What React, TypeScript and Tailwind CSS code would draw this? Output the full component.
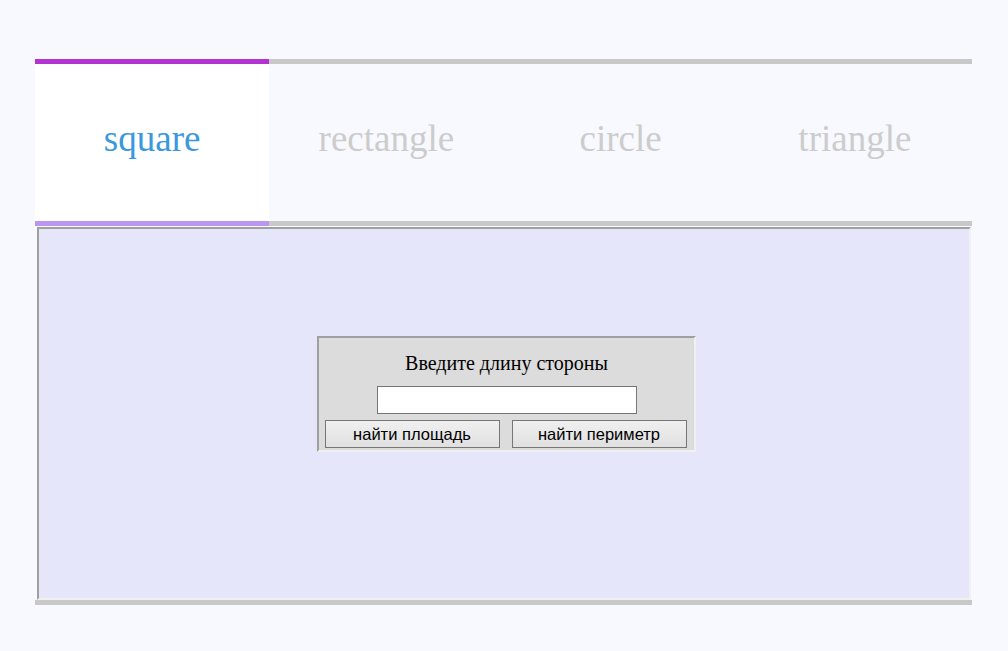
import React from "react";

const tabs = ["square", "rectangle", "circle", "triangle"];

export default function App() {
  return (
    <div className="min-h-[651px] w-full bg-[#f8f8ff] pt-[59px] px-[35px] [font-family:'Liberation_Serif',serif]">
      <div className="w-[937px]">
        <div className="flex">
          {tabs.map((t, i) => (
            <div
              key={t}
              className={
                "flex-1 h-[167px] flex items-center justify-center border-t-[5px] border-b-[5px] text-[37px] " +
                (i === 0
                  ? "bg-white border-t-[#b233d1] border-b-[#bb96f0] text-[#3a98dc]"
                  : "border-t-[#c8c8c8] border-b-[#c8c8c8] text-[#cccccc]")
              }
            >
              <span className="-mt-[7px]">{t}</span>
            </div>
          ))}
        </div>
        <div className="border-b-[5px] border-b-[#c8c8c8]">
          <div className="ml-[2px] mr-[1px] mt-[1px] h-[373px] bg-[#e6e6fa] border-2 border-t-[#a0a0a0] border-l-[#a0a0a0] border-r-[#f0f0f0] border-b-[#f0f0f0] flex items-start justify-center pt-[107px]">
            <div className="ml-[5px] w-[379px] h-[116px] bg-[#dcdcdc] border-2 border-t-[#a0a0a0] border-l-[#a0a0a0] border-r-[#f0f0f0] border-b-[#f0f0f0] flex flex-col items-center">
              <div className="mt-[13px] text-[20px] leading-[24px] text-black">Введите длину стороны</div>
              <input className="mt-[11px] w-[260px] h-[28px] bg-white border border-[#767676] outline-none" />
              <div className="mt-[6px] -ml-[2px] flex gap-[12px]">
                <button className="w-[175px] h-[28px] border border-[#767676] bg-gradient-to-b from-[#f0f0f0] to-[#e0e0e0] text-[16.5px] text-black [font-family:'Liberation_Sans',Arial,sans-serif]">
                  найти площадь
                </button>
                <button className="w-[175px] h-[28px] border border-[#767676] bg-gradient-to-b from-[#f0f0f0] to-[#e0e0e0] text-[16.5px] text-black [font-family:'Liberation_Sans',Arial,sans-serif]">
                  найти периметр
                </button>
              </div>
            </div>
          </div>
        </div>
      </div>
    </div>
  );
}
